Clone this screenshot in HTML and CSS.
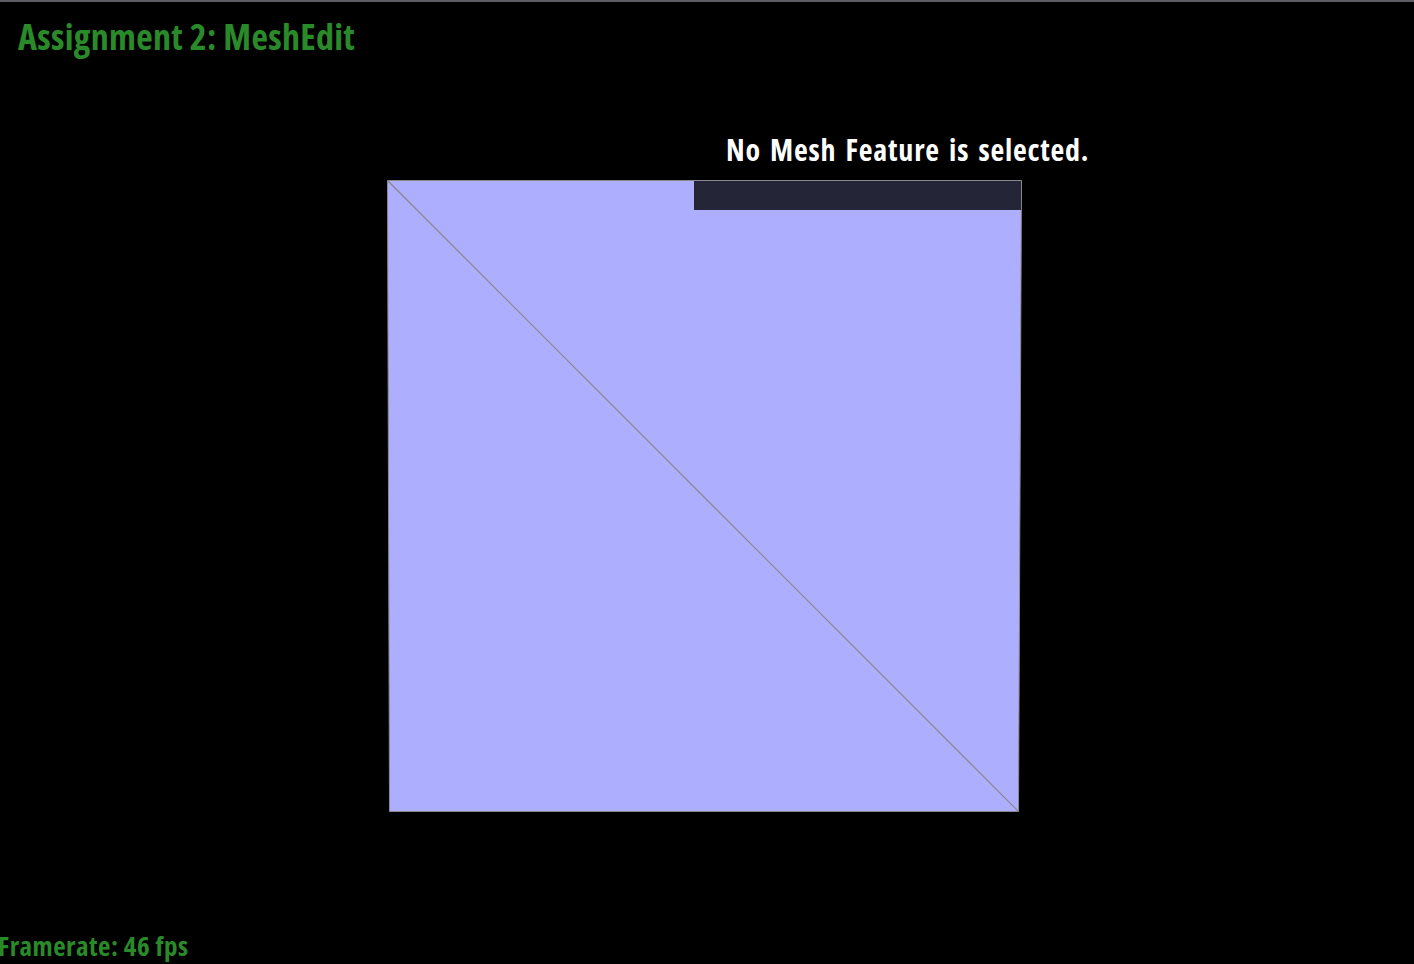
FILE: index.html
```html
<!DOCTYPE html>
<html>
<head>
<meta charset="utf-8">
<link rel="stylesheet" href="styles.css">
</head>
<body>
<div class="viewport">
  <h1 class="title">Assignment 2: MeshEdit</h1>
  <svg class="mesh" width="1414" height="964" viewBox="0 0 1414 964">
    <polygon points="387.5,180.5 1021.5,180.5 1018.5,811.5 389.5,811.5" fill="#aeaeff" stroke="#8a8a8e" stroke-width="1"/>
    <line x1="387.5" y1="180.5" x2="1018.5" y2="811.5" stroke="#868686" stroke-width="1.2"/>
    <rect x="694" y="181" width="327" height="29" fill="#252538"/>
  </svg>
  <div class="info">No Mesh Feature is selected.</div>
  <div class="fps">Framerate: 46 fps</div>
</div>
</body>
</html>
```
FILE: styles.css
```css
html, body {
  margin: 0;
  padding: 0;
  background: #000;
}
.viewport {
  position: relative;
  width: 1414px;
  height: 962px;
  border-top: 2px solid #5c5c62;
  overflow: hidden;
  font-family: "Open Sans", "DejaVu Sans Condensed", sans-serif;
  font-weight: 700;
  font-stretch: 75%;
}
.title {
  margin: 0;
  padding: 13px 0 0 18px;
  font-size: 36px;
  line-height: 44px;
  letter-spacing: 0.3px;
  color: #2a8a2a;
  font-weight: 700;
  position: relative;
  z-index: 1;
}
.mesh {
  position: absolute;
  left: 0;
  top: -2px;
}
.info {
  position: absolute;
  left: 726px;
  top: 128px;
  font-size: 30px;
  line-height: 40px;
  letter-spacing: 0.8px;
  word-spacing: 3px;
  color: #fff;
}
.fps {
  position: absolute;
  left: -2px;
  bottom: 0;
  font-size: 27px;
  line-height: 36px;
  letter-spacing: 0.5px;
  color: #2a8a2a;
}
```
